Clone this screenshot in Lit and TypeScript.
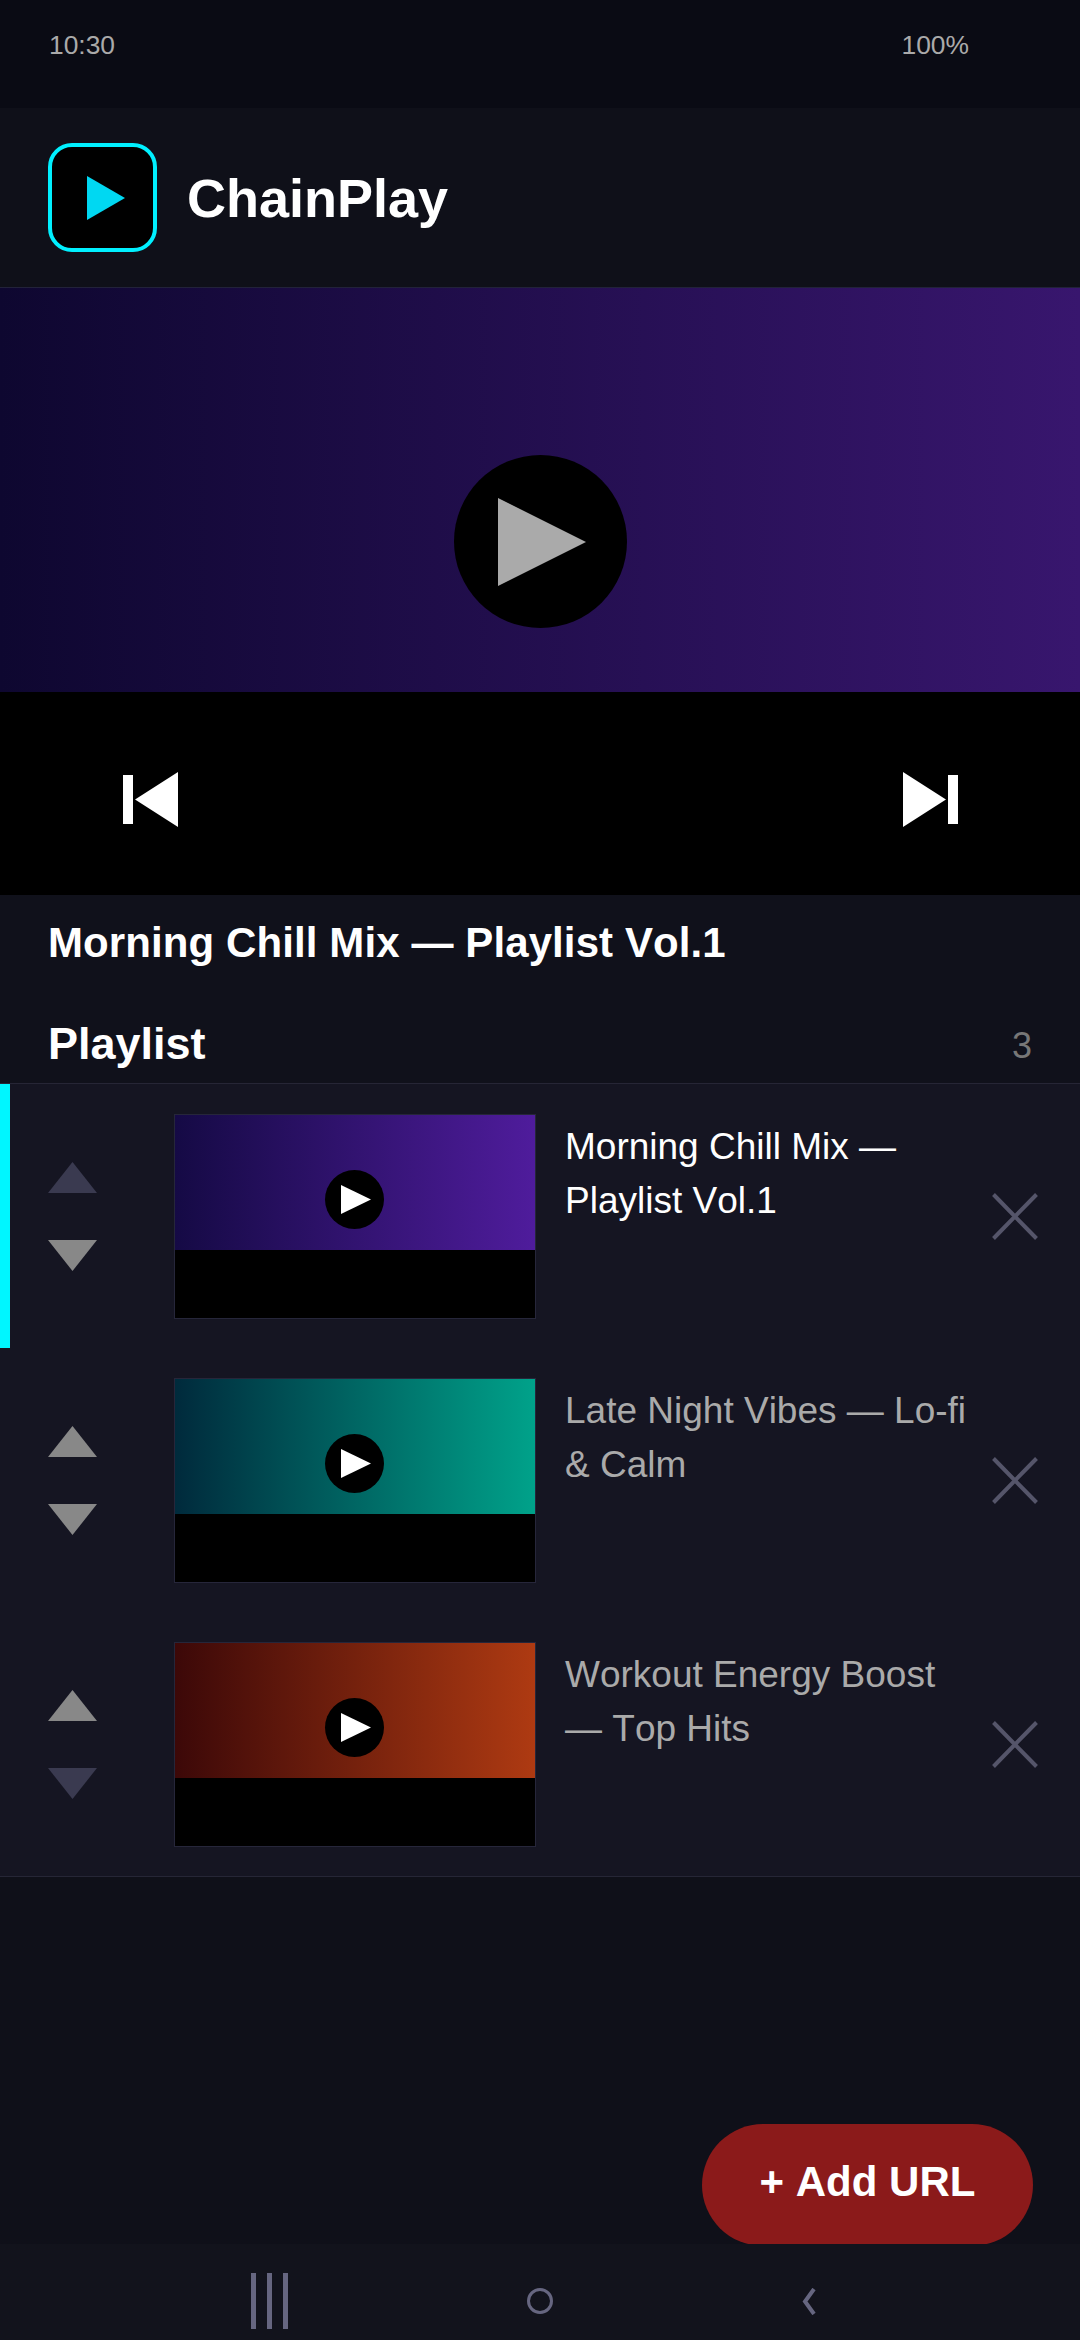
import { LitElement, html, css, svg } from "lit";
import { customElement } from "lit/decorators.js";

interface Track { title: string; grad: string; upOff: boolean; downOff: boolean; active: boolean; }

const TRACKS: Track[] = [
  { title: "Morning Chill Mix — Playlist Vol.1", grad: "linear-gradient(90deg,#150a45,#4f1c9c)", upOff: true, downOff: false, active: true },
  { title: "Late Night Vibes — Lo-fi & Calm", grad: "linear-gradient(90deg,#002a3c,#00a28a)", upOff: false, downOff: false, active: false },
  { title: "Workout Energy Boost — Top Hits", grad: "linear-gradient(90deg,#3c0808,#ae3a12)", upOff: false, downOff: true, active: false },
];

@customElement("app-root")
export class AppRoot extends LitElement {
  static styles = css`
    :host {
      display: flex;
      flex-direction: column;
      position: relative;
      width: 1080px;
      height: 2340px;
      overflow: hidden;
      background: #0f1019;
      font-family: "Liberation Sans", Arial, sans-serif;
      font-kerning: none;
      color: #fff;
    }
    svg { display: block; flex: none; }
    .status {
      height: 108px;
      flex: none;
      box-sizing: border-box;
      display: flex;
      justify-content: space-between;
      padding: 30px 111px 0 49px;
      background: #0a0b14;
      font-size: 26.4px;
      line-height: 30px;
      color: #aaa;
    }
    .header {
      height: 180px;
      flex: none;
      box-sizing: border-box;
      display: flex;
      align-items: center;
      gap: 30px;
      padding: 0 48px;
      background: #0f1019;
      border-bottom: 1px solid #22223a;
    }
    .logo {
      width: 109px;
      height: 109px;
      box-sizing: border-box;
      border: 4px solid #00f0ff;
      border-radius: 24px;
      background: #000;
      display: flex;
      align-items: center;
      justify-content: center;
      padding-left: 6px;
    }
    .brand { font-size: 54px; font-weight: 700; }
    .player { height: 607px; flex: none; position: relative; background: #000; }
    .video { height: 404px; background: linear-gradient(90deg,#0e0730,#38166e); }
    .big-play {
      position: absolute;
      left: 454px;
      top: 167px;
      width: 173px;
      height: 173px;
      border-radius: 50%;
      background: #000;
      display: flex;
      align-items: center;
      justify-content: center;
    }
    .transport {
      height: 203px;
      box-sizing: border-box;
      padding: 11px 122px 0 123px;
      display: flex;
      align-items: center;
      justify-content: space-between;
    }
    .title-block {
      flex: none;
      padding: 22px 48px 0;
      font-size: 42px;
      letter-spacing: 0.1px;
      line-height: 52px;
      font-weight: 700;
      height: 74px;
      box-sizing: content-box;
      background: #10111b;
    }
    .list-head {
      flex: none;
      height: 93px;
      box-sizing: border-box;
      padding: 0 48px 0;
      display: flex;
      align-items: flex-end;
      justify-content: space-between;
      border-bottom: 1px solid #262636;
      background: #10111b;
    }
    .list-head h2 { margin: 0 0 13px; font-size: 45px; line-height: 52px; font-weight: 700; }
    .count { font-size: 36px; line-height: 44px; color: #777; margin-bottom: 15px; }
    .rows { flex: none; border-bottom: 1px solid #262636; background: #151522; }
    .row {
      height: 264px;
      box-sizing: border-box;
      display: flex;
      align-items: center;
      padding: 0 42px 0 38px;
      border-left: 10px solid transparent;
    }
    .row.active { border-left-color: #00f6ff; }
    .arrows { width: 49px; display: flex; flex-direction: column; gap: 47px; margin-right: 77px; }
    .thumb {
      width: 362px;
      height: 205px;
      flex: none;
      box-sizing: border-box;
      border: 1px solid #26263a;
      background: #000;
      position: relative;
      margin-right: 29px;
    }
    .thumb-grad { height: 135px; }
    .thumb-play {
      position: absolute;
      left: 150px;
      top: 55px;
      width: 59px;
      height: 59px;
      border-radius: 50%;
      background: #000;
      display: flex;
      align-items: center;
      justify-content: center;
    }
    .name {
      flex: 1;
      align-self: flex-start;
      margin-top: 36px;
      font-size: 37px;
      line-height: 54px;
      color: #aaa;
      padding-right: 16px;
    }
    .row.active .name { color: #fff; }
    .fab {
      position: absolute;
      left: 702px;
      top: 2124px;
      width: 331px;
      height: 122px;
      box-sizing: border-box;
      padding-bottom: 6px;
      border-radius: 61px;
      background: #8b1a1a;
      display: flex;
      align-items: center;
      justify-content: center;
      font-size: 42px;
      font-weight: 700;
      z-index: 1;
    }
    .spacer { flex: 1; }
    .nav {
      height: 96px;
      flex: none;
      box-sizing: border-box;
      padding-top: 18px;
      background: #12131c;
      position: relative;
      z-index: 2;
      display: grid;
      grid-template-columns: 251px 37px 239px 26px 249px 14px;
      align-items: center;
    }
    .nav svg:nth-child(1) { grid-column: 2; }
    .nav svg:nth-child(2) { grid-column: 4; }
    .nav svg:nth-child(3) { grid-column: 6; }
  `;

  private tri(dir: "up" | "down", off: boolean) {
    const pts = dir === "up" ? "24.5,0 49,31 0,31" : "0,0 49,0 24.5,31";
    return svg`<svg width="49" height="31" viewBox="0 0 49 31"><polygon points=${pts} fill=${off ? "#3a3a50" : "#888"} /></svg>`;
  }

  render() {
    return html`
      <div class="status"><span>10:30</span><span>100%</span></div>
      <div class="header">
        <div class="logo">
          <svg width="38" height="44" viewBox="0 0 38 44"><polygon points="0,0 38,22 0,44" fill="#00d8f2" /></svg>
        </div>
        <div class="brand">ChainPlay</div>
      </div>
      <div class="player">
        <div class="video"></div>
        <div class="big-play">
          <svg width="88" height="88" viewBox="0 0 88 88" style="margin-left:3px"><polygon points="0,0 88,44 0,88" fill="#aaa" /></svg>
        </div>
        <div class="transport">
          <svg width="55" height="55" viewBox="0 0 55 55"><rect x="0" y="3" width="10" height="49" fill="#fff" /><polygon points="55,0 55,55 12,27.5" fill="#fff" /></svg>
          <svg width="55" height="55" viewBox="0 0 55 55"><polygon points="0,0 0,55 43,27.5" fill="#fff" /><rect x="45" y="3" width="10" height="49" fill="#fff" /></svg>
        </div>
      </div>
      <div class="title-block">Morning Chill Mix — Playlist Vol.1</div>
      <div class="list-head"><h2>Playlist</h2><span class="count">3</span></div>
      <div class="rows">
        ${TRACKS.map((t) => html`
          <div class="row ${t.active ? "active" : ""}">
            <div class="arrows">${this.tri("up", t.upOff)}${this.tri("down", t.downOff)}</div>
            <div class="thumb">
              <div class="thumb-grad" style="background:${t.grad}"></div>
              <div class="thumb-play">
                <svg width="30" height="29" viewBox="0 0 30 29" style="margin-left:2px"><polygon points="0,0 30,14.5 0,29" fill="#fff" /></svg>
              </div>
            </div>
            <div class="name">${t.title}</div>
            <svg width="46" height="47" viewBox="0 0 46 47"><path d="M1.5 1.5 44.5 45.5M44.5 1.5 1.5 45.5" stroke="#55556a" stroke-width="4" fill="none" /></svg>
          </div>
        `)}
      </div>
      <div class="spacer"></div>
      <div class="fab">+ Add URL</div>
      <div class="nav">
        <svg width="37" height="56" viewBox="0 0 37 56"><path d="M2.5 0V56M18.5 0V56M34.5 0V56" stroke="#666680" stroke-width="5" fill="none" /></svg>
        <svg width="26" height="26" viewBox="0 0 26 26"><circle cx="13" cy="13" r="11.5" stroke="#666680" stroke-width="3" fill="none" /></svg>
        <svg width="14" height="27" viewBox="0 0 14 27"><path d="M12 1 3 13.5 12 26" stroke="#666680" stroke-width="4" fill="none" /></svg>
      </div>
    `;
  }
}
